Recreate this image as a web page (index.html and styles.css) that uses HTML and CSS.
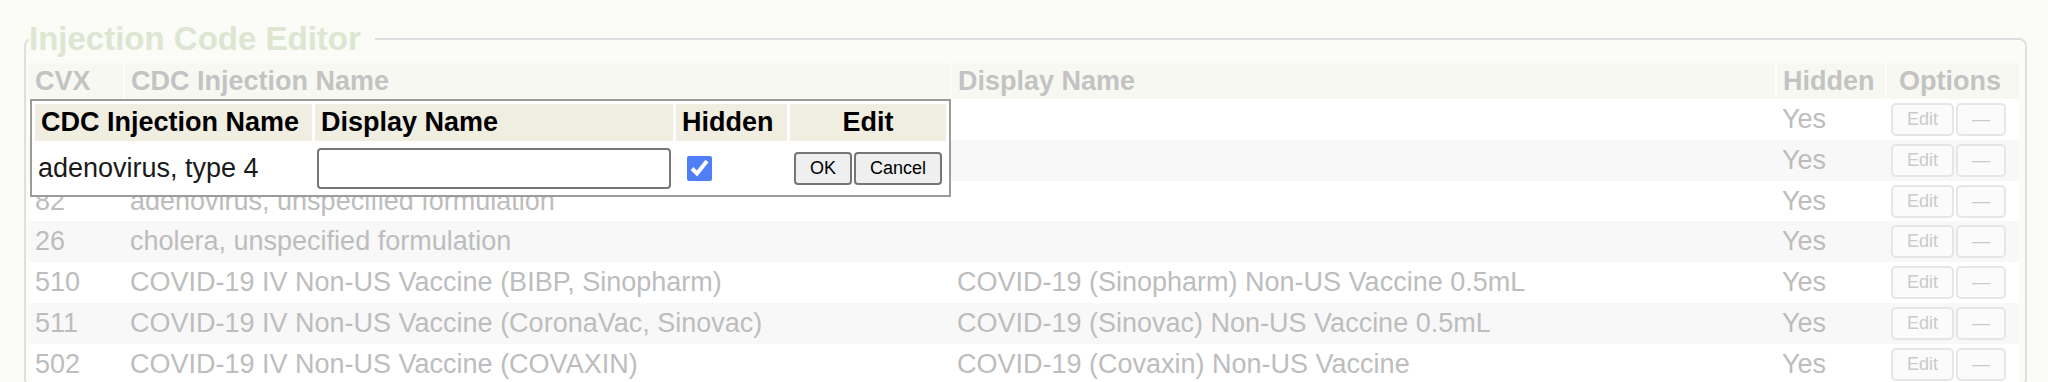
FILE: index.html
```html
<!DOCTYPE html>
<html>
    <head>
        <meta charset="utf-8">
        <title>Injection Code Editor</title>
        <link rel="stylesheet" href="styles.css">
    </head>
    <body>
        <fieldset class="editor">
            <legend class="editor-title">Injection Code Editor</legend>
            <table class="codes">
                <thead>
                    <tr>
                        <th class="col-cvx">CVX</th>
                        <th class="col-name">CDC Injection Name</th>
                        <th class="col-display">Display Name</th>
                        <th class="col-hidden">Hidden</th>
                        <th class="col-options">Options</th>
                    </tr>
                </thead>
                <tbody>
                    <tr>
                        <td>54</td>
                        <td>adenovirus, type 4</td>
                        <td></td>
                        <td>Yes</td>
                        <td class="options"><button class="opt">Edit</button><button class="opt">&mdash;</button></td>
                    </tr>
                    <tr>
                        <td>55</td>
                        <td>adenovirus, type 7</td>
                        <td></td>
                        <td>Yes</td>
                        <td class="options"><button class="opt">Edit</button><button class="opt">&mdash;</button></td>
                    </tr>
                    <tr>
                        <td>82</td>
                        <td>adenovirus, unspecified formulation</td>
                        <td></td>
                        <td>Yes</td>
                        <td class="options"><button class="opt">Edit</button><button class="opt">&mdash;</button></td>
                    </tr>
                    <tr>
                        <td>26</td>
                        <td>cholera, unspecified formulation</td>
                        <td></td>
                        <td>Yes</td>
                        <td class="options"><button class="opt">Edit</button><button class="opt">&mdash;</button></td>
                    </tr>
                    <tr>
                        <td>510</td>
                        <td>COVID-19 IV Non-US Vaccine (BIBP, Sinopharm)</td>
                        <td>COVID-19 (Sinopharm) Non-US Vaccine 0.5mL</td>
                        <td>Yes</td>
                        <td class="options"><button class="opt">Edit</button><button class="opt">&mdash;</button></td>
                    </tr>
                    <tr>
                        <td>511</td>
                        <td>COVID-19 IV Non-US Vaccine (CoronaVac, Sinovac)</td>
                        <td>COVID-19 (Sinovac) Non-US Vaccine 0.5mL</td>
                        <td>Yes</td>
                        <td class="options"><button class="opt">Edit</button><button class="opt">&mdash;</button></td>
                    </tr>
                    <tr>
                        <td>502</td>
                        <td>COVID-19 IV Non-US Vaccine (COVAXIN)</td>
                        <td>COVID-19 (Covaxin) Non-US Vaccine</td>
                        <td>Yes</td>
                        <td class="options"><button class="opt">Edit</button><button class="opt">&mdash;</button></td>
                    </tr>
                </tbody>
            </table>
        </fieldset>

        <div class="popup">
            <table class="edit-table">
                <tr>
                    <th class="e-name">CDC Injection Name</th>
                    <th class="e-display">Display Name</th>
                    <th class="e-hidden">Hidden</th>
                    <th class="e-edit">Edit</th>
                </tr>
                <tr>
                    <td>adenovirus, type 4</td>
                    <td><input type="text" class="display-input"></td>
                    <td><input type="checkbox" class="hidden-check" checked></td>
                    <td class="e-buttons"><button class="btn">OK</button><button class="btn">Cancel</button></td>
                </tr>
            </table>
        </div>
    </body>
</html>
```

FILE: styles.css
```css
html, body {
    margin: 0;
    height: 382px;
    overflow: hidden;
}
body {
    padding: 20px 21px 0 24px;
    box-sizing: border-box;
    background-color: #fbfbf7;
    font-family: "Liberation Sans", Arial, sans-serif;
    font-size: 27px;
}
.editor {
    margin: 0;
    padding: 5px 6px 0 3px;
    border: 2px solid #e0dee0;
    border-radius: 8px;
    min-width: 0;
}
.editor-title {
    padding: 0 14px 0 0;
    margin-left: 0;
    font-size: 33px;
    font-weight: bold;
    color: #dde6d1;
}
.codes {
    width: 1990px;
    border-collapse: collapse;
    table-layout: fixed;
}
.codes th, .codes td {
    box-sizing: border-box;
}
.codes th {
    height: 36px;
    padding: 0 6px;
    text-align: left;
    font-weight: bold;
    color: #c3c3c3;
    background-color: #f8f8f3;
    border-left: 2px solid #fcfcf9;
    white-space: nowrap;
}
.codes th:first-child {
    border-left: 0;
}
.col-cvx { width: 95px; }
.col-name { width: 827px; }
.col-display { width: 825px; }
.col-hidden { width: 110px; }
.col-options { width: 133px; }
.codes th.col-options {
    padding-left: 12px;
}
.codes td {
    height: 40.83px;
    padding: 0 6px;
    color: #bdbdbd;
    white-space: nowrap;
    background-color: #ffffff;
}
.codes tbody tr:nth-child(even) td {
    background-color: #f8f8f8;
}
.codes td.options {
    padding: 0 5px;
    font-size: 0;
}
.opt {
    height: 33px;
    margin: 0 2px 0 0;
    padding: 0 14px;
    border: 2px solid #e6e6e6;
    border-radius: 5px;
    background-color: #fbfbfb;
    color: #cacaca;
    font-family: "Liberation Sans", Arial, sans-serif;
    font-size: 18px;
    vertical-align: middle;
}
.popup {
    position: absolute;
    left: 30px;
    top: 99px;
    background-color: #ffffff;
    border: 2px solid #9b9b9b;
}
.edit-table {
    border-spacing: 3px;
}
.edit-table th {
    height: 37px;
    padding: 0 6px;
    text-align: left;
    font-weight: bold;
    color: #000000;
    background-color: #f0eee1;
}
.edit-table th.e-edit {
    text-align: center;
}
.e-name { width: 265px; }
.e-display { width: 346px; }
.e-hidden { width: 99px; }
.e-edit { width: 143px; }
.edit-table td {
    height: 48px;
    padding: 0 3px;
    color: #1a1a1a;
    white-space: nowrap;
}
.edit-table td:nth-child(2) {
    padding: 0 2px;
}
.display-input {
    display: block;
    width: 354px;
    height: 41px;
    box-sizing: border-box;
    margin: 0;
    border: 2px solid #767676;
    border-radius: 4px;
    font-size: 20px;
}
.hidden-check {
    display: block;
    width: 25px;
    height: 25px;
    margin: 0 0 0 8px;
    accent-color: #4f7ef6;
}
.e-buttons {
    text-align: center;
    font-size: 0;
}
.btn {
    height: 33px;
    margin: 0 1px;
    padding: 0 14px;
    border: 2px solid #767676;
    border-radius: 4px;
    background-color: #efefef;
    color: #000000;
    font-family: "Liberation Sans", Arial, sans-serif;
    font-size: 18px;
    vertical-align: middle;
}
```
